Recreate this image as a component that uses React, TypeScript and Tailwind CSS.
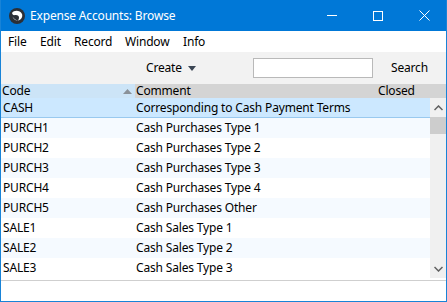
import React from "react";

const rows: { code: string; comment: string }[] = [
  { code: "CASH", comment: "Corresponding to Cash Payment Terms" },
  { code: "PURCH1", comment: "Cash Purchases Type 1" },
  { code: "PURCH2", comment: "Cash Purchases Type 2" },
  { code: "PURCH3", comment: "Cash Purchases Type 3" },
  { code: "PURCH4", comment: "Cash Purchases Type 4" },
  { code: "PURCH5", comment: "Cash Purchases Other" },
  { code: "SALE1", comment: "Cash Sales Type 1" },
  { code: "SALE2", comment: "Cash Sales Type 2" },
  { code: "SALE3", comment: "Cash Sales Type 3" },
];

const menu: { label: string; w: string }[] = [
  { label: "File", w: "w-[32px]" },
  { label: "Edit", w: "w-[34px]" },
  { label: "Record", w: "w-[51px]" },
  { label: "Window", w: "w-[58px]" },
  { label: "Info", w: "w-[30px]" },
];

function Logo() {
  return (
    <svg width="18" height="18" viewBox="0 0 18 18">
      <circle cx="9" cy="9" r="8" fill="#2b2f36" />
      <path d="M4 6 C6 3, 12 3, 14 7 C15 10, 13 13, 10 13.5 C12 11, 11 8, 8 8 C6 8, 5 9, 4 6 Z" fill="#fff" />
      <path d="M4.5 9.5 C5.5 12.5, 8 14, 10 13.5 C7.5 13, 6 12, 4.5 9.5 Z" fill="#e8e8e8" />
    </svg>
  );
}

export default function App() {
  return (
    <div
      className="w-[447px] h-[302px] flex flex-col bg-white border border-[#1883d7] border-t-0 overflow-hidden text-[12px] tracking-[-0.17px] text-black"
      style={{ fontFamily: '"Segoe UI", "Noto Sans", "Liberation Sans", sans-serif' }}
    >
      {/* title bar */}
      <div className="h-[31px] flex items-center bg-[#0078d7] text-white shrink-0 -mx-px">
        <div className="pl-[8px] pr-[4px] flex items-center"><Logo /></div>
        <span className="text-[12px]">Expense Accounts: Browse</span>
        <div className="flex-1" />
        <div className="w-[46px] h-full flex items-center justify-center">
          <div className="w-[10px] h-px bg-white" />
        </div>
        <div className="w-[46px] h-full flex items-center justify-center">
          <div className="w-[10px] h-[10px] border border-white" />
        </div>
        <div className="w-[46px] h-full flex items-center justify-center">
          <svg width="11" height="11" viewBox="0 0 11 11"><path d="M0.5 0.5 L10.5 10.5 M10.5 0.5 L0.5 10.5" stroke="#fff" strokeWidth="1" /></svg>
        </div>
      </div>

      {/* menu */}
      <div className="h-[21px] flex items-center pl-[7px] shrink-0">
        {menu.map((m) => (
          <span key={m.label} className={m.w}>{m.label}</span>
        ))}
      </div>

      {/* toolbar */}
      <div className="h-[32px] flex items-center bg-[#f2f2f2] shrink-0">
        <span className="ml-[145px] w-[42px]">Create</span>
        <svg width="8" height="5" viewBox="0 0 8 5"><path d="M0 0 H8 L4 5 Z" fill="#3b4654" /></svg>
        <div className="ml-[57px] w-[120px] h-[20px] bg-white border border-[#b9b9b9]" />
        <span className="ml-[18px]">Search</span>
      </div>

      {/* header */}
      <div className="h-[14px] flex items-center bg-[#d4d4d4] shrink-0 leading-none">
        <div className="w-[134px] h-full bg-[#cce4f7] flex items-center justify-between pl-[1px] pr-[3px]">
          <span>Code</span>
          <svg width="9" height="5" viewBox="0 0 9 5"><path d="M0 5 L4.5 0 L9 5 Z" fill="#8a9199" /></svg>
        </div>
        <div className="w-[243px] pl-[1px]">Comment</div>
        <div>Closed</div>
      </div>

      {/* list */}
      <div className="flex shrink-0">
        <div className="flex-1 flex flex-col">
          {rows.map((r, i) => (
            <div
              key={r.code}
              className={`h-[20px] flex items-center ${
                i === 0 ? "bg-[#cce8ff] border-b border-[#99c9ef]" : i % 2 === 1 ? "bg-[#f5faff]" : "bg-white"
              }`}
            >
              <span className="w-[135px] pl-[2px]">{r.code}</span>
              <span>{r.comment}</span>
            </div>
          ))}
        </div>
        <div className="w-[16px] bg-[#f0f0f0] flex flex-col items-center">
          <div className="h-[19px] flex items-center justify-center">
            <svg width="9" height="6" viewBox="0 0 9 6"><path d="M0.5 5 L4.5 1 L8.5 5" stroke="#606060" strokeWidth="1.5" fill="none" /></svg>
          </div>
          <div className="w-[16px] h-[17px] bg-[#cdcdcd]" />
          <div className="flex-1" />
          <div className="h-[19px] flex items-center justify-center">
            <svg width="9" height="6" viewBox="0 0 9 6"><path d="M0.5 1 L4.5 5 L8.5 1" stroke="#606060" strokeWidth="1.5" fill="none" /></svg>
          </div>
        </div>
      </div>
      <div className="h-px bg-[#cfcfcf] mt-[2px] shrink-0" />
      <div className="flex-1" />
    </div>
  );
}
